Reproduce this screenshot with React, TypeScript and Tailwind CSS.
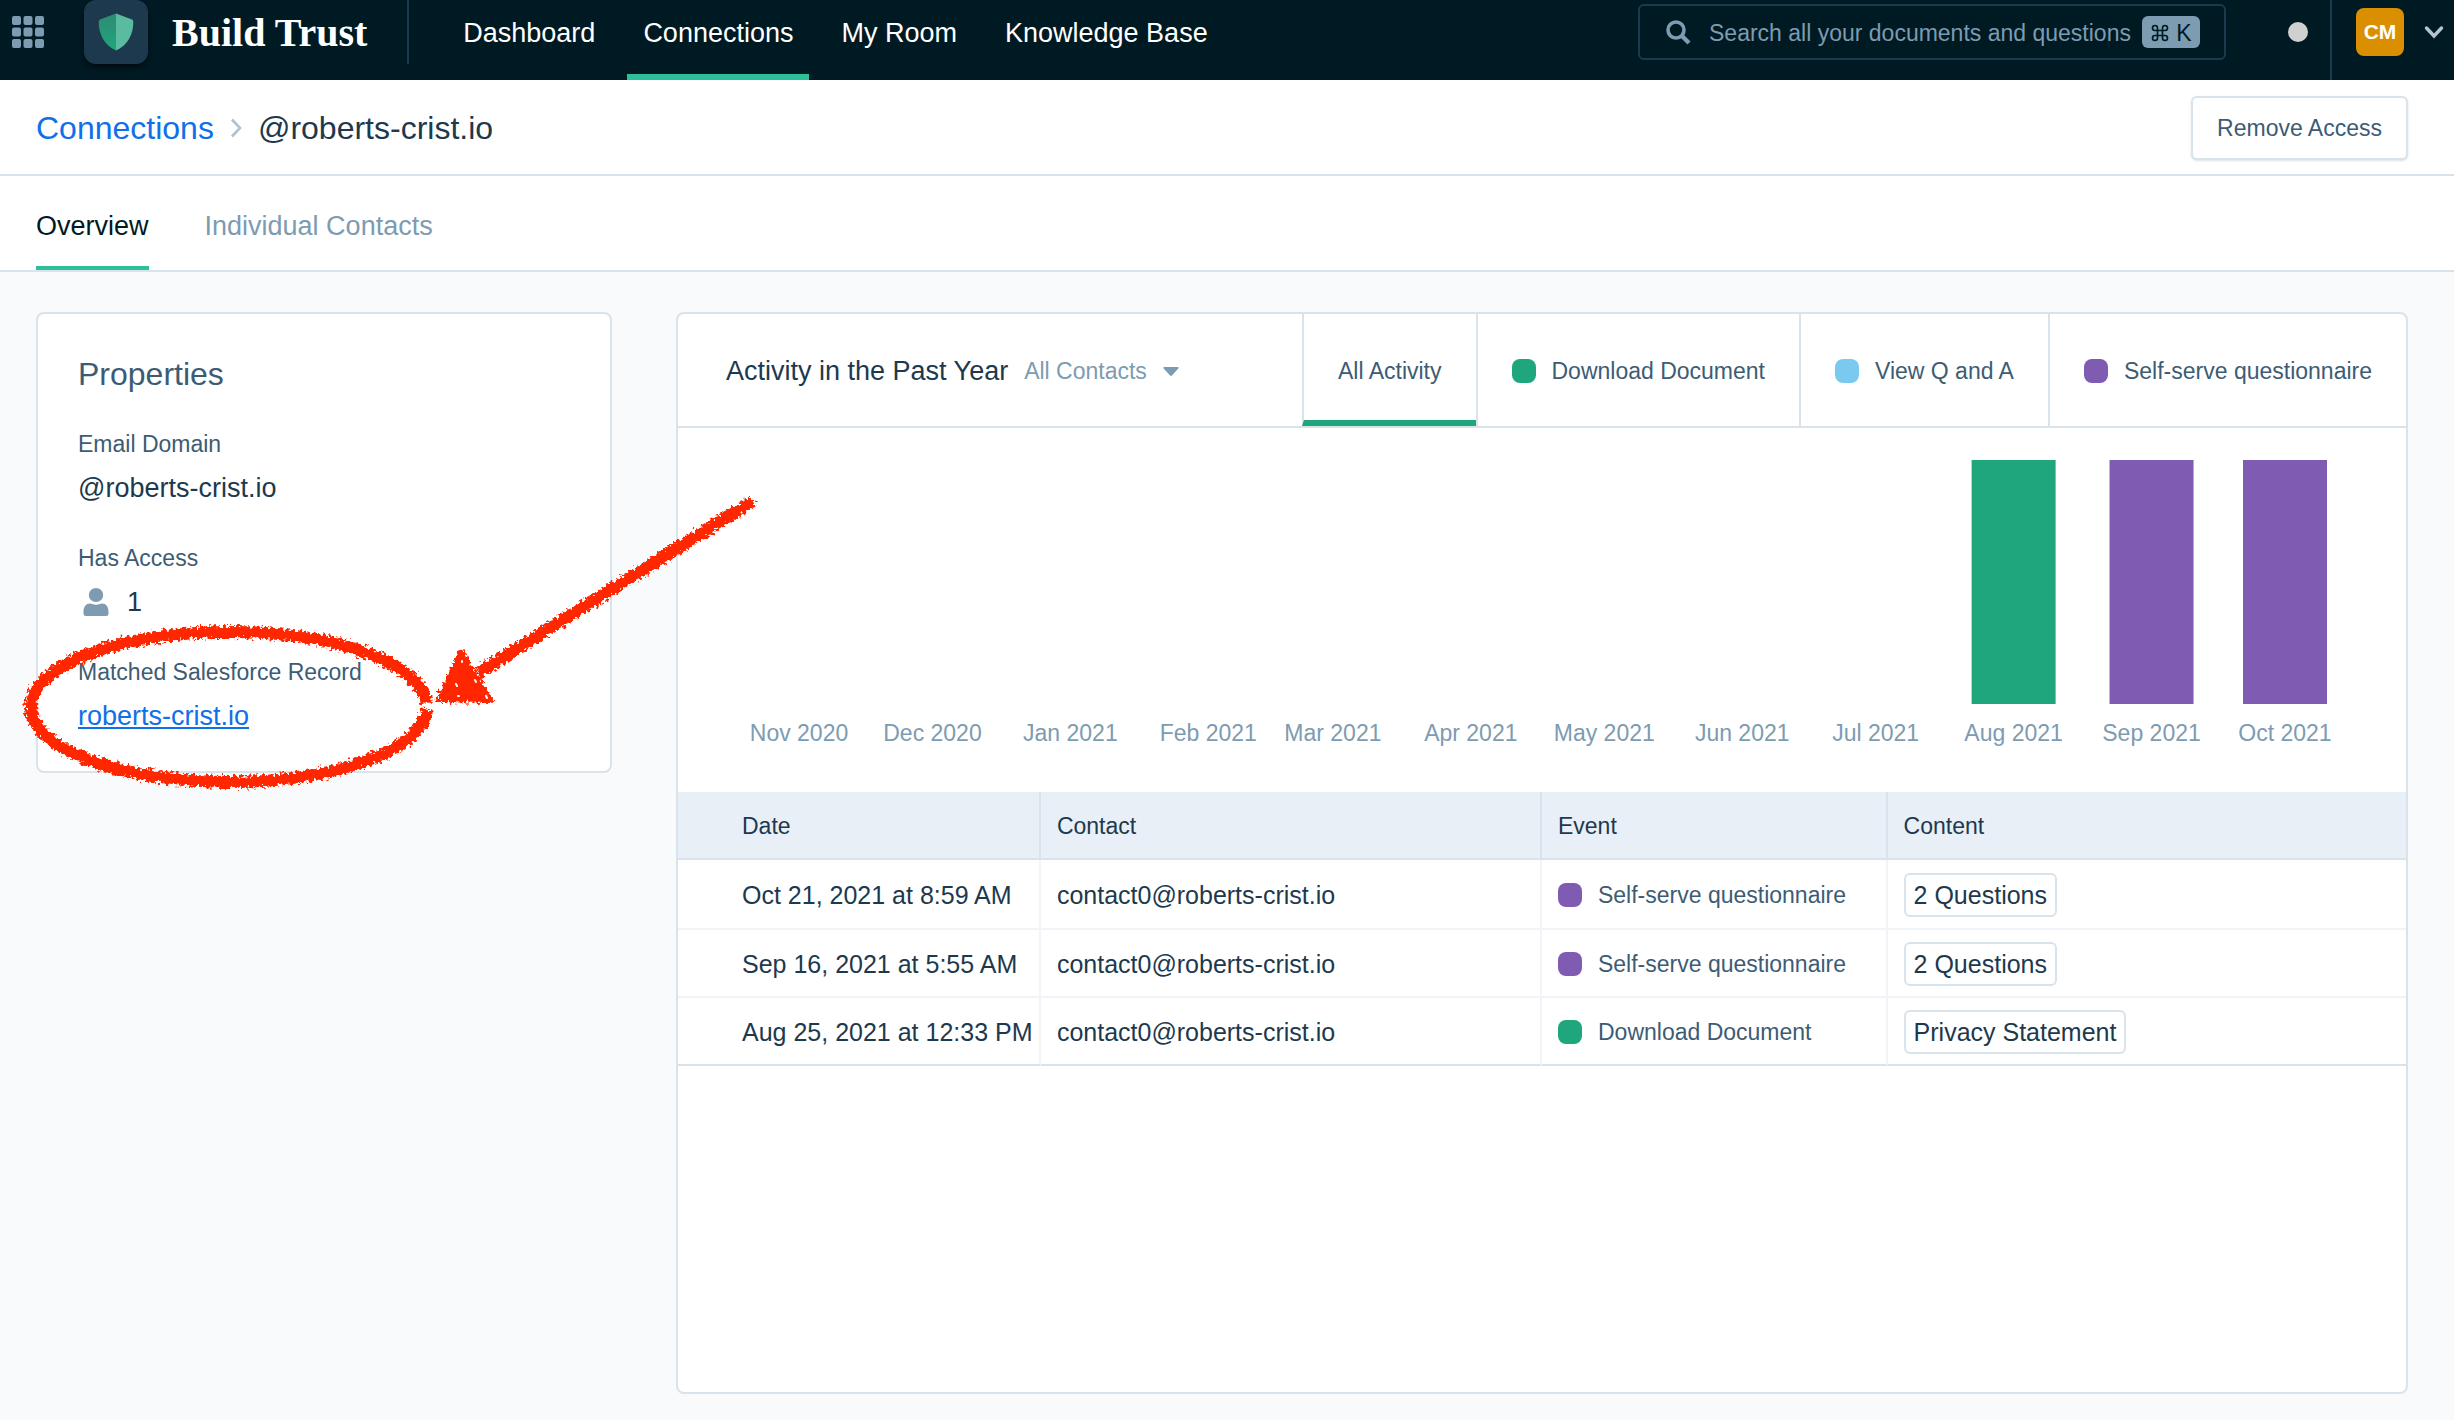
import { Command } from 'lucide-react';

const navItems = [
  { name: 'Dashboard', active: false },
  { name: 'Connections', active: true },
  { name: 'My Room', active: false },
  { name: 'Knowledge Base', active: false },
];

const activityTabs = [
  { name: 'All Activity', swatch: '', active: true },
  { name: 'Download Document', swatch: 'bg-[#1fa67d]', active: false },
  { name: 'View Q and A', swatch: 'bg-[#79caee]', active: false },
  { name: 'Self-serve questionnaire', swatch: 'bg-[#7f5cb2]', active: false },
];

// day = days since the first month on the axis
const months = [
  { label: 'Nov 2020', day: 0, fill: '' },
  { label: 'Dec 2020', day: 30, fill: '' },
  { label: 'Jan 2021', day: 61, fill: '' },
  { label: 'Feb 2021', day: 92, fill: '' },
  { label: 'Mar 2021', day: 120, fill: '' },
  { label: 'Apr 2021', day: 151, fill: '' },
  { label: 'May 2021', day: 181, fill: '' },
  { label: 'Jun 2021', day: 212, fill: '' },
  { label: 'Jul 2021', day: 242, fill: '' },
  { label: 'Aug 2021', day: 273, fill: '#1fa67d' },
  { label: 'Sep 2021', day: 304, fill: '#7f5cb2' },
  { label: 'Oct 2021', day: 334, fill: '#7f5cb2' },
];

const events = [
  {
    date: 'Oct 21, 2021 at 8:59 AM',
    contact: 'contact0@roberts-crist.io',
    event: 'Self-serve questionnaire',
    swatch: 'bg-[#7f5cb2]',
    content: '2 Questions',
  },
  {
    date: 'Sep 16, 2021 at 5:55 AM',
    contact: 'contact0@roberts-crist.io',
    event: 'Self-serve questionnaire',
    swatch: 'bg-[#7f5cb2]',
    content: '2 Questions',
  },
  {
    date: 'Aug 25, 2021 at 12:33 PM',
    contact: 'contact0@roberts-crist.io',
    event: 'Download Document',
    swatch: 'bg-[#1fa67d]',
    content: 'Privacy Statement',
  },
];

function AppsIcon() {
  return (
    <svg viewBox="0 0 32 32" className="h-8 w-8" fill="#7d9bb1">
      {[0, 11.5, 23].map((y) =>
        [0, 11.5, 23].map((x) => <rect key={`${x}-${y}`} x={x} y={y} width="9" height="9" rx="2" />),
      )}
    </svg>
  );
}

function Logo() {
  return (
    <div className="flex h-16 w-16 items-center justify-center rounded-xl bg-[#1d394d] shadow-md shadow-black/50">
      <svg viewBox="0 0 36 38" className="h-[38px] w-9">
        <defs>
          <linearGradient id="shieldLeft" x1="0" y1="0" x2="0" y2="1">
            <stop offset="0" stopColor="#2f8b72" />
            <stop offset="1" stopColor="#1fa67d" />
          </linearGradient>
        </defs>
        <path d="M18 0.5 L2 6.5 Q0.7 7 0.7 9 C0.7 21 6 32 18 37.5 Z" fill="url(#shieldLeft)" />
        <path d="M18 0.5 L34 6.5 Q35.3 7 35.3 9 C35.3 21 30 32 18 37.5 Z" fill="#5bbba0" />
      </svg>
    </div>
  );
}

function Header() {
  return (
    <header className="flex h-20 items-start bg-[#001a23] pl-3 pr-[10px]">
      <button aria-label="Apps" className="flex h-16 items-center">
        <AppsIcon />
      </button>
      <a href="#home" className="ml-10 flex items-center gap-6">
        <Logo />
        <span className="whitespace-nowrap pt-[2px] font-['Liberation_Serif',serif] text-[40px] font-bold text-white">
          Build Trust
        </span>
      </a>
      <div className="ml-10 h-16 w-[2px] bg-[#1d394d]" />

      <nav className="ml-[38px] flex gap-4">
        {navItems.map((item) => (
          <a
            key={item.name}
            href="#nav"
            className={`flex h-20 items-center whitespace-nowrap border-b-[6px] px-4 pb-2 text-[27px] text-white ${
              item.active ? 'border-[#2dc098]' : 'border-transparent'
            }`}
          >
            {item.name}
          </a>
        ))}
      </nav>

      <label className="ml-auto mt-1 flex h-14 w-[588px] items-center rounded-md border-2 border-[#1d394d] pl-[26px] pr-6">
        <svg viewBox="0 0 25 25" className="h-[25px] w-[25px] shrink-0" fill="none" stroke="#7d9bb1">
          <circle cx="10" cy="10" r="8" strokeWidth="3.6" />
          <path d="M16 16 L23 23" strokeWidth="4.4" />
        </svg>
        <input
          type="text"
          aria-label="Search"
          placeholder="Search all your documents and questions"
          className="ml-[18px] min-w-0 flex-1 bg-transparent pt-[2px] text-[23px] text-white outline-none placeholder:text-[#7d9bb1]"
        />
        <kbd className="flex h-8 w-[58px] shrink-0 items-center justify-center gap-[6px] rounded-md bg-[#7d9bb1] pt-[2px] font-[inherit] text-[23px] text-[#001a23]">
          <Command size={20} />K
        </kbd>
      </label>

      <div className="ml-[62px] mt-[22px] h-5 w-5 rounded-full bg-[#d0d0d0]" />
      <div className="ml-[22px] h-20 w-[2px] bg-[#1d394d]" />
      <button className="ml-6 flex h-16 items-center gap-5">
        <span className="flex h-12 w-12 items-center justify-center rounded-lg bg-[#d98f00] text-[21px] font-bold text-white">
          CM
        </span>
        <svg
          viewBox="0 0 20 14"
          className="h-[14px] w-5"
          fill="none"
          stroke="#b4c4d0"
          strokeWidth="3.4"
          strokeLinecap="round"
        >
          <path d="M2.5 3 L10 11 L17.5 3" />
        </svg>
      </button>
    </header>
  );
}

function PersonIcon() {
  return (
    <svg viewBox="0 0 26 28" className="h-7 w-[26px]" fill="#7d9bb1">
      <ellipse cx="13" cy="7" rx="7.2" ry="7" />
      <path d="M0.5 24 C0.5 18.5 3 15.5 7 15.5 C9 15.5 10.5 16.8 13 16.8 C15.5 16.8 17 15.5 19 15.5 C23 15.5 25.5 18.5 25.5 24 V25.5 Q25.5 28 23 28 H3 Q0.5 28 0.5 25.5 Z" />
    </svg>
  );
}

// hand-drawn marker over the Salesforce link
function Annotation() {
  return (
    <svg
      viewBox="38 314 760 500"
      className="pointer-events-none absolute left-0 top-0 z-10 h-[500px] w-[760px] overflow-visible"
      fill="none"
      stroke="#ff2600"
    >
      <defs>
        <filter id="crayon" filterUnits="userSpaceOnUse" x="0" y="460" width="800" height="360">
          <feTurbulence type="fractalNoise" baseFrequency="0.3" numOctaves="3" seed="4" result="noise" />
          <feDisplacementMap
            in="SourceGraphic"
            in2="noise"
            scale="10"
            xChannelSelector="R"
            yChannelSelector="G"
          />
        </filter>
      </defs>
      <g filter="url(#crayon)">
        <path
          d="M427 709 A198 75 0 0 1 229 782 A198 75 0 0 1 31 706 A198 75 0 0 1 229 632 A198 75 0 0 1 427 703"
          strokeWidth="12"
        />
        <path d="M753 501 L478 673" strokeWidth="12" />
        <path d="M461 653 L439 699 L490 700 Z" strokeWidth="6" strokeLinejoin="round" fill="#ff2600" />
      </g>
      <g stroke="#ffffff" strokeWidth="2" strokeLinecap="round">
        <path d="M462 661 v1 M456 684 l1 2 M458 696 h1 M475 680 l1 2 M486 696 l1 2" />
      </g>
    </svg>
  );
}

function Properties() {
  return (
    <aside className="relative flex w-[576px] shrink-0 flex-col gap-[34px] self-start rounded-lg border-2 border-[#d8e3eb] bg-white px-10 pb-[35px] pt-10">
      <h2 className="text-[32px] leading-10 text-[#3d5c74]">Properties</h2>
      <div className="flex flex-col gap-2">
        <span className="text-[23px] leading-8 text-[#3d5c74]">Email Domain</span>
        <span className="text-[27px] leading-10 text-[#1d394d]">@roberts-crist.io</span>
      </div>
      <div className="flex flex-col gap-2">
        <span className="text-[23px] leading-8 text-[#3d5c74]">Has Access</span>
        <span className="flex items-center gap-[18px] pl-[5px] text-[27px] leading-10 text-[#1d394d]">
          <PersonIcon />1
        </span>
      </div>
      <div className="flex flex-col gap-2">
        <span className="text-[23px] leading-8 text-[#3d5c74]">Matched Salesforce Record</span>
        <a href="#record" className="self-start text-[27px] leading-10 text-[#1070e8] underline decoration-2 underline-offset-2">
          roberts-crist.io
        </a>
      </div>
      <Annotation />
    </aside>
  );
}

function ActivityChart() {
  return (
    <svg viewBox="0 0 1728 364" className="block h-auto w-full" role="img" aria-label="Activity by month">
      {months.map((m) => {
        const x = 121 + (m.day * 1486) / 334;
        return (
          <g key={m.label}>
            {m.fill && <rect x={x - 42} y="32" width="84" height="244" fill={m.fill} />}
            <text x={x} y="313" textAnchor="middle" fontSize="23" fill="#7d9bb1">
              {m.label}
            </text>
          </g>
        );
      })}
    </svg>
  );
}

function EventsTable() {
  return (
    <table className="w-full table-fixed border-separate border-spacing-0 text-left">
      <thead>
        <tr className="h-[68px] bg-[#e8eff6] text-[23px] text-[#1d394d]">
          <th className="w-[21%] border-b-2 border-r-2 border-[#d8e3eb] pl-16 pt-[2px] font-normal">Date</th>
          <th className="w-[29%] border-b-2 border-r-2 border-[#d8e3eb] pl-4 pt-[2px] font-normal">Contact</th>
          <th className="w-[20%] border-b-2 border-r-2 border-[#d8e3eb] pl-4 pt-[2px] font-normal">Event</th>
          <th className="border-b-2 border-[#d8e3eb] pl-4 pt-[2px] font-normal">Content</th>
        </tr>
      </thead>
      <tbody className="text-[25px] text-[#1d394d] [&_td]:border-b-2 [&_td]:border-[#f0f4f8] [&_tr:last-child_td]:border-b-[#d8e3eb]">
        {events.map((e) => (
          <tr key={e.date} className="h-[68px] first:h-[70px]">
            <td className="whitespace-nowrap border-r-2 pl-16 pt-1">{e.date}</td>
            <td className="border-r-2 pl-4 pt-1">{e.contact}</td>
            <td className="border-r-2 pl-4 pt-[2px]">
              <span className="flex items-center gap-4 whitespace-nowrap text-[23px] text-[#3d5c74]">
                <span className={`h-6 w-6 shrink-0 rounded-lg ${e.swatch}`} />
                {e.event}
              </span>
            </td>
            <td className="pl-4 pt-[2px]">
              <button className="flex h-11 items-center rounded-md border-2 border-[#d8e3eb] px-2 pt-[2px]">
                {e.content}
              </button>
            </td>
          </tr>
        ))}
      </tbody>
    </table>
  );
}

function Activity() {
  return (
    <section className="min-w-0 flex-1 rounded-lg border-2 border-[#d8e3eb] bg-white">
      <div className="flex h-[114px] items-stretch border-b-2 border-[#d8e3eb]">
        <div className="flex flex-1 items-center gap-4 whitespace-nowrap pl-12 pt-[2px]">
          <h2 className="text-[27px] text-[#1d394d]">Activity in the Past Year</h2>
          <label className="flex items-center gap-4 text-[#7d9bb1]">
            <select aria-label="Contacts" className="appearance-none bg-transparent text-[23px] outline-none">
              <option>All Contacts</option>
            </select>
            <svg viewBox="0 0 16 9" className="h-[9px] w-4" fill="currentColor">
              <path d="M1 0 H15 Q16 0.5 15.3 1.5 L9 8.4 Q8 9.2 7 8.4 L0.7 1.5 Q0 0.5 1 0 Z" />
            </svg>
          </label>
        </div>
        {activityTabs.map((tab) => (
          <button
            key={tab.name}
            className={`flex items-center gap-4 whitespace-nowrap border-l-2 border-l-[#d8e3eb] px-[34px] text-[23px] text-[#3d5c74] ${
              tab.active ? 'border-b-[6px] border-b-[#1fa67d] pt-2' : 'pt-[2px]'
            }`}
          >
            {tab.swatch && <span className={`h-6 w-6 rounded-lg ${tab.swatch}`} />}
            {tab.name}
          </button>
        ))}
      </div>
      <ActivityChart />
      <EventsTable />
    </section>
  );
}

export default function App() {
  return (
    <div className="flex min-h-screen flex-col bg-[#f8fafc] font-['Liberation_Sans',Arial,sans-serif]">
      <Header />

      <div className="flex h-24 items-center justify-between border-b-2 border-[#d8e3eb] bg-white pl-9 pr-[46px] pt-[2px]">
        <div className="flex items-center text-[32px] text-[#1d394d]">
          <a href="#connections" className="text-[#1070e8]">
            Connections
          </a>
          <svg viewBox="0 0 12 20" className="mx-4 h-5 w-3" fill="none" stroke="#b0c2cf" strokeWidth="2.6">
            <path d="M2 1.5 L10 10 L2 18.5" />
          </svg>
          <h1>@roberts-crist.io</h1>
        </div>
        <button className="h-16 rounded-md border-2 border-[#d8e3eb] bg-white px-6 text-[23px] text-[#3d5c74] shadow-sm">
          Remove Access
        </button>
      </div>

      <div className="flex h-24 gap-14 border-b-2 border-[#d8e3eb] bg-white pl-9 text-[27px]">
        <a href="#overview" className="flex items-center border-b-4 border-[#2dc098] pt-[10px] text-[#001a23]">
          Overview
        </a>
        <a href="#contacts" className="flex items-center pt-[6px] text-[#7d9bb1]">
          Individual Contacts
        </a>
      </div>

      <main className="flex flex-1 gap-16 pb-[26px] pl-9 pr-[46px] pt-10">
        <Properties />
        <Activity />
      </main>
    </div>
  );
}
